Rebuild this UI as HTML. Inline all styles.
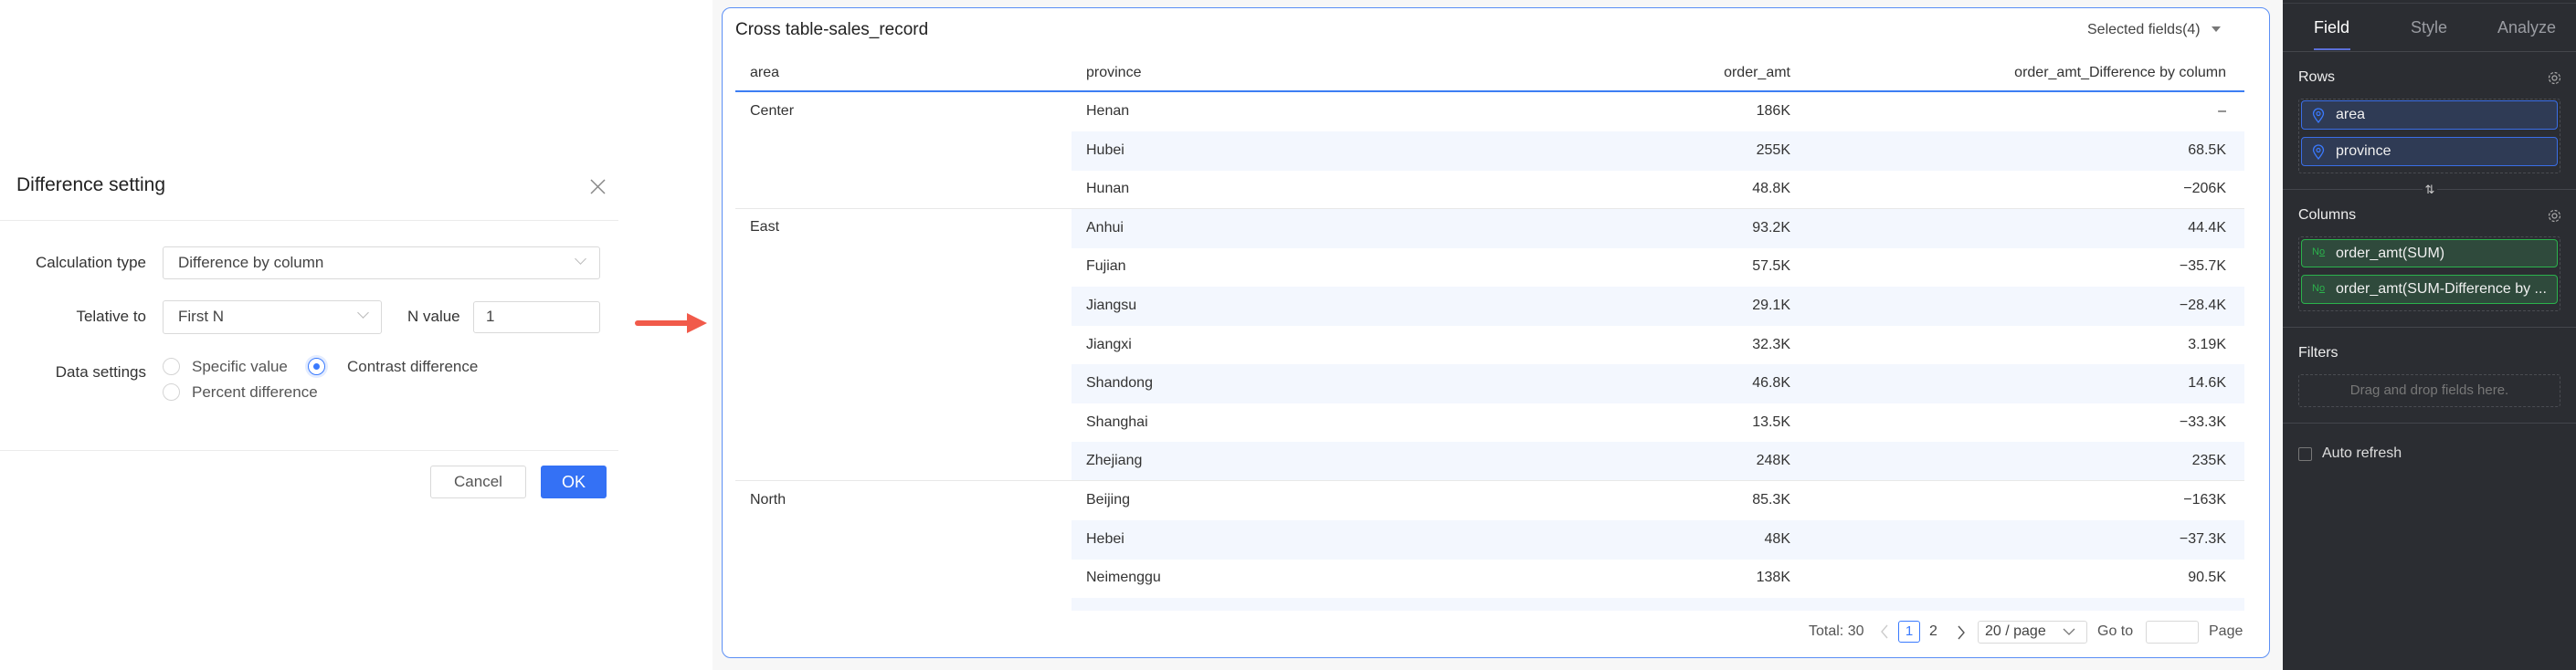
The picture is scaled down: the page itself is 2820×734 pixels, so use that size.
<!DOCTYPE html>
<html><head><meta charset="utf-8"><style>
*{box-sizing:border-box;margin:0;padding:0}
body{width:2820px;height:734px;position:relative;overflow:hidden;background:#fff;font-family:"Liberation Sans",Arial,sans-serif;color:#333}
.a{position:absolute;white-space:nowrap}
.lbl{font-size:17px;color:#333;text-align:right;width:160px}
.box{position:absolute;border:1.5px solid #d9d9d9;border-radius:3px;background:#fff}
.chev{position:absolute;width:9px;height:9px;border-right:1.3px solid #aaa;border-bottom:1.3px solid #aaa;transform:rotate(45deg)}
.radio{position:absolute;width:19px;height:19px;border:1.5px solid #d4d4d4;border-radius:50%;background:#fff}
.t{font-size:16px;color:#333}
.stripe{position:absolute;left:1173px;width:1284px;height:43px;background:#f3f7fe}
.panel{position:absolute;left:2499px;top:0;width:321px;height:734px;background:#2b2d32}
.pill{position:absolute;left:2519px;width:281px;border-radius:4px;font-size:16px;color:#f0f0f0;padding-left:37px;white-space:nowrap;overflow:hidden}
</style></head><body>
<!-- dialog -->
<div class="a" style="left:18px;top:191px;font-size:21px;color:#222">Difference setting</div>
<svg class="a" style="left:646px;top:196px" width="17" height="17"><path d="M1 1L16 16M16 1L1 16" stroke="#888" stroke-width="1.5"/></svg>
<div class="a" style="left:0;top:241px;width:677px;height:1px;background:#ebebeb"></div>
<div class="a lbl" style="left:0;top:278px">Calculation type</div>
<div class="box" style="left:178px;top:270px;width:479px;height:36px"></div>
<div class="a" style="left:195px;top:278px;font-size:17px;color:#444">Difference by column</div>
<div class="chev" style="left:631px;top:279px;border-color:#bbb"></div>
<div class="a lbl" style="left:0;top:337px">Telative to</div>
<div class="box" style="left:178px;top:329px;width:240px;height:37px"></div>
<div class="a" style="left:195px;top:337px;font-size:17px;color:#444">First N</div>
<div class="chev" style="left:393px;top:338px;border-color:#bbb"></div>
<div class="a" style="left:446px;top:337px;font-size:17px">N value</div>
<div class="box" style="left:518px;top:330px;width:139px;height:35px"></div>
<div class="a" style="left:532px;top:337px;font-size:17px;color:#444">1</div>
<div class="a lbl" style="left:0;top:398px">Data settings</div>
<div class="radio" style="left:178px;top:392px"></div>
<div class="a" style="left:210px;top:392px;font-size:17px;color:#555">Specific value</div>
<div class="radio" style="left:337px;top:392px;border-color:#3a7afe;box-shadow:0 0 0 3px #e3ecff"></div>
<div class="a" style="left:343px;top:398px;width:7px;height:7px;border-radius:50%;background:#3a7afe"></div>
<div class="a" style="left:380px;top:392px;font-size:17px;color:#444">Contrast difference</div>
<div class="radio" style="left:178px;top:420px"></div>
<div class="a" style="left:210px;top:420px;font-size:17px;color:#555">Percent difference</div>
<div class="a" style="left:0;top:493px;width:677px;height:1px;background:#ebebeb"></div>
<div class="box" style="left:471px;top:510px;width:105px;height:36px"></div>
<div class="a" style="left:471px;top:518px;width:105px;text-align:center;font-size:17px;color:#555">Cancel</div>
<div class="a" style="left:592px;top:510px;width:72px;height:36px;background:#3471f5;border-radius:3px;color:#fff;font-size:18px;text-align:center;line-height:36px">OK</div>
<!-- arrow -->
<svg class="a" style="left:694px;top:342px" width="82" height="24"><path d="M4 12H62" stroke="#f15a4a" stroke-width="6" stroke-linecap="round"/><path d="M58 1L80 12L58 23Z" fill="#f15a4a"/></svg>
<!-- canvas bg -->
<div class="a" style="left:780px;top:0;width:1719px;height:734px;background:#f7f7f7"></div>
<div class="a" style="left:790px;top:8px;width:1695px;height:713px;background:#fff;border:1.5px solid #5b8ff5;border-radius:10px"></div>
<div class="a" style="left:805px;top:22px;font-size:19px;color:#222">Cross table-sales_record</div>
<div class="a" style="left:2285px;top:24px;font-size:16px;color:#444">Selected fields(4)</div>
<svg class="a" style="left:2421px;top:29px" width="10" height="7"><path d="M0 0H10L5 6Z" fill="#777"/></svg>
<div class="a t" style="left:821px;top:71px">area</div>
<div class="a t" style="left:1189px;top:71px">province</div>
<div class="a t" style="left:1751px;top:71px;width:209px;text-align:right">order_amt</div>
<div class="a t" style="left:2100px;top:71px;width:337px;text-align:right">order_amt_Difference by column</div>
<div class="a" style="left:805px;top:99px;width:1652px;height:2px;background:#3c7ef3"></div>
<div class="stripe" style="top:144px"></div>
<div class="stripe" style="top:229px"></div>
<div class="stripe" style="top:314px"></div>
<div class="stripe" style="top:399px"></div>
<div class="stripe" style="top:484px"></div>
<div class="stripe" style="top:570px"></div>
<div class="stripe" style="top:655px;height:14px"></div>
<div class="a" style="left:805px;top:228px;width:1652px;height:1px;background:#e8e8e8"></div>
<div class="a" style="left:805px;top:526px;width:1652px;height:1px;background:#e8e8e8"></div>
<div class="a t" style="left:821px;top:113px">Center</div>
<div class="a t" style="left:821px;top:240px">East</div>
<div class="a t" style="left:821px;top:539px">North</div>
<div id="rows"></div>
<script>
var d=[["Henan","186K","–"],["Hubei","255K","68.5K"],["Hunan","48.8K","−206K"],["Anhui","93.2K","44.4K"],["Fujian","57.5K","−35.7K"],["Jiangsu","29.1K","−28.4K"],["Jiangxi","32.3K","3.19K"],["Shandong","46.8K","14.6K"],["Shanghai","13.5K","−33.3K"],["Zhejiang","248K","235K"],["Beijing","85.3K","−163K"],["Hebei","48K","−37.3K"],["Neimenggu","138K","90.5K"]];
var h="";d.forEach(function(r,i){var y=Math.round(113+i*42.6);
h+='<div class="a t" style="left:1189px;top:'+y+'px">'+r[0]+'</div><div class="a t" style="left:1751px;top:'+y+'px;width:209px;text-align:right">'+r[1]+'</div><div class="a t" style="left:2100px;top:'+y+'px;width:337px;text-align:right">'+r[2]+'</div>';});
document.getElementById("rows").innerHTML=h;
</script>
<!-- pagination -->
<div class="a" style="left:1980px;top:683px;font-size:16px;color:#555">Total: 30</div>
<svg class="a" style="left:2058px;top:684px" width="10" height="16"><path d="M8 1L2 8L8 15" stroke="#ccc" stroke-width="1.4" fill="none"/></svg>
<div class="a" style="left:2078px;top:680px;width:24px;height:24px;border:1.5px solid #3a7afe;border-radius:3px;color:#3a7afe;font-size:15px;text-align:center;line-height:21px">1</div>
<div class="a" style="left:2112px;top:683px;font-size:16px;color:#444">2</div>
<svg class="a" style="left:2142px;top:685px" width="10" height="16"><path d="M2 1L8 8L2 15" stroke="#555" stroke-width="1.4" fill="none"/></svg>
<div class="a" style="left:2165px;top:680px;width:120px;height:25px;border:1px solid #d9d9d9;border-radius:3px"></div>
<div class="a" style="left:2173px;top:683px;font-size:16px;color:#444">20 / page</div>
<svg class="a" style="left:2258px;top:688px" width="14" height="9"><path d="M1 1L7 7L13 1" stroke="#777" stroke-width="1.3" fill="none"/></svg>
<div class="a" style="left:2296px;top:683px;font-size:16px;color:#555">Go to</div>
<div class="a" style="left:2349px;top:680px;width:58px;height:25px;border:1px solid #d9d9d9;border-radius:3px"></div>
<div class="a" style="left:2418px;top:683px;font-size:16px;color:#555">Page</div>
<!-- panel -->
<div class="panel"></div>
<div class="a" style="left:2499px;top:3px;width:321px;height:1px;background:#3d3f45"></div>
<div class="a" style="left:2533px;top:20px;font-size:18px;color:#fff">Field</div>
<div class="a" style="left:2639px;top:20px;font-size:18px;color:#9a9ca2">Style</div>
<div class="a" style="left:2734px;top:20px;font-size:18px;color:#9a9ca2">Analyze</div>
<div class="a" style="left:2533px;top:53px;width:40px;height:2px;background:#5b6fd8"></div>
<div class="a" style="left:2499px;top:56px;width:321px;height:1px;background:#44464c"></div>
<div class="a" style="left:2516px;top:76px;font-size:16px;color:#eee">Rows</div>
<svg class="a" style="left:2789px;top:78px" width="15" height="15"><circle cx="7.5" cy="7.5" r="2.5" stroke="#aaa" fill="none" stroke-width="1.2"/><circle cx="7.5" cy="7.5" r="6" stroke="#aaa" fill="none" stroke-width="1.2" stroke-dasharray="3 1.7"/></svg>
<div class="a" style="left:2516px;top:108px;width:287px;height:82px;border:1px dashed #4a4c52;border-radius:3px"></div>
<div class="pill" style="top:110px;height:32px;line-height:30px;background:#2f3b55;border:1.5px solid #3a6ee6">area</div>
<div class="pill" style="top:150px;height:32px;line-height:30px;background:#2f3b55;border:1.5px solid #3a6ee6">province</div>
<svg class="a" style="left:2531px;top:118px" width="14" height="17"><path d="M7 16C3 11 1.5 8.5 1.5 6.5A5.5 5.5 0 0 1 12.5 6.5C12.5 8.5 11 11 7 16Z" stroke="#3a7afe" fill="none" stroke-width="1.3"/><circle cx="7" cy="6.5" r="2" stroke="#3a7afe" fill="none" stroke-width="1.2"/></svg>
<svg class="a" style="left:2531px;top:158px" width="14" height="17"><path d="M7 16C3 11 1.5 8.5 1.5 6.5A5.5 5.5 0 0 1 12.5 6.5C12.5 8.5 11 11 7 16Z" stroke="#3a7afe" fill="none" stroke-width="1.3"/><circle cx="7" cy="6.5" r="2" stroke="#3a7afe" fill="none" stroke-width="1.2"/></svg>
<div class="a" style="left:2499px;top:207px;width:321px;height:1px;background:#44464c"></div>
<div class="a" style="left:2652px;top:200px;width:16px;height:15px;background:#2b2d32;color:#ccc;font-size:13px;text-align:center">⇅</div>
<div class="a" style="left:2516px;top:227px;font-size:16px;color:#eee">Columns</div>
<svg class="a" style="left:2789px;top:229px" width="15" height="15"><circle cx="7.5" cy="7.5" r="2.5" stroke="#aaa" fill="none" stroke-width="1.2"/><circle cx="7.5" cy="7.5" r="6" stroke="#aaa" fill="none" stroke-width="1.2" stroke-dasharray="3 1.7"/></svg>
<div class="a" style="left:2516px;top:259px;width:287px;height:82px;border:1px dashed #4a4c52;border-radius:3px"></div>
<div class="pill" style="top:262px;height:31px;line-height:29px;background:#2f4a3c;border:1.5px solid #2bb24c">order_amt(SUM)</div>
<div class="pill" style="top:301px;height:32px;line-height:30px;background:#2f4a3c;border:1.5px solid #2bb24c">order_amt(SUM-Difference by ...</div>
<div class="a" style="left:2531px;top:270px;font-size:11px;color:#2bb24c">N<u>o</u></div>
<div class="a" style="left:2531px;top:310px;font-size:11px;color:#2bb24c">N<u>o</u></div>
<div class="a" style="left:2499px;top:358px;width:321px;height:1px;background:#44464c"></div>
<div class="a" style="left:2516px;top:378px;font-size:16px;color:#eee">Filters</div>
<div class="a" style="left:2516px;top:410px;width:287px;height:36px;border:1px dashed #4a4c52;border-radius:3px;color:#777;font-size:15px;text-align:center;line-height:34px">Drag and drop fields here.</div>
<div class="a" style="left:2499px;top:463px;width:321px;height:1px;background:#44464c"></div>
<div class="a" style="left:2516px;top:490px;width:15px;height:15px;border:1px solid #777;border-radius:2px"></div>
<div class="a" style="left:2542px;top:488px;font-size:16px;color:#ddd">Auto refresh</div>
</body></html>
